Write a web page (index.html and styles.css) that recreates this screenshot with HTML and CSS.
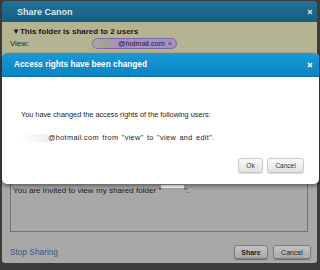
FILE: index.html
```html
<!DOCTYPE html>
<html>
<head>
<meta charset="utf-8">
<link rel="stylesheet" href="styles.css">
</head>
<body>
<div class="page">
  <div class="dlg">
    <div class="dlg-head">
      <span>Share Canon</span>
      <svg class="x" width="6" height="6" viewBox="0 0 6 6"><path d="M1 1L5 5M5 1L1 5" stroke="#c9d6de" stroke-width="1.6"/></svg>
    </div>
    <div class="shared">
      <div class="shared-title">▼This folder is shared to 2 users</div>
      <div class="shared-row">
        <span class="lbl">View:</span>
        <span class="pill"><span class="blur"></span>@hotmail.com<span class="px">×</span></span>
      </div>
    </div>
    <div class="dlg-body">
      <div class="msgbox">You are invited to view my shared folder "<span class="redact"></span>".</div>
      <div class="foot">
        <a class="stop">Stop Sharing</a>
        <div class="btns">
          <button class="btn dark strong">Share</button>
          <button class="btn dark">Cancel</button>
        </div>
      </div>
    </div>
  </div>

  <div class="modal">
    <div class="modal-head">
      <span>Access rights have been changed</span>
      <svg class="x" width="6" height="6" viewBox="0 0 6 6"><path d="M1 1L5 5M5 1L1 5" stroke="#ffffff" stroke-width="1.6"/></svg>
    </div>
    <div class="modal-body">
      <p class="line1">You have changed the access rights of the following users:</p>
      <p class="line2"><span class="ghost"></span>@hotmail.com from "view" to "view and edit".</p>
      <div class="modal-btns">
        <button class="btn light">Ok</button>
        <button class="btn light">Cancel</button>
      </div>
    </div>
  </div>
</div>
</body>
</html>
```

FILE: styles.css
```css
html, body {
  margin: 0;
  padding: 0;
}
body {
  width: 320px;
  height: 270px;
  overflow: hidden;
  background: #3c3c3c;
  font-family: "Liberation Sans", Arial, Helvetica, sans-serif;
}
.page {
  position: relative;
  height: 270px;
  padding: 1px 3px 0 2px;
  box-sizing: border-box;
}
.dlg {
  height: 262px;
  background: #a8a8a8;
  border-radius: 5px 5px 3px 3px;
  display: flex;
  flex-direction: column;
  overflow: hidden;
}
.dlg-head {
  height: 21px;
  flex: none;
  background: linear-gradient(#1f7299, #155f80);
  color: #dfe8ee;
  font-weight: bold;
  font-size: 9px;
  display: flex;
  align-items: center;
  justify-content: space-between;
  padding: 0 4px 0 15px;
}
.shared {
  flex: none;
  height: 31px;
  box-sizing: border-box;
  background: #b4b392;
  padding: 5px 8px 3px 8px;
  color: #1a1a14;
  font-size: 8px;
}
.shared-title {
  height: 10px;
  line-height: 10px;
  font-weight: bold;
  padding-left: 2px;
}
.shared-row {
  height: 13px;
  display: flex;
  align-items: center;
}
.lbl {
  width: 82px;
  color: #2b2b22;
  font-size: 7.8px;
}
.pill {
  height: 11px;
  box-sizing: border-box;
  display: flex;
  align-items: center;
  background: #a48fcb;
  border: 1px solid #7f68aa;
  border-radius: 6px;
  padding-right: 4px;
  font-size: 7.3px;
  color: #222;
  overflow: hidden;
}
.blur {
  width: 25px;
  height: 11px;
  background: linear-gradient(90deg, #a9a59e 0%, #a3a18c 60%, #a48fcb 100%);
}
.px {
  margin-left: 3px;
  color: #444;
}
.dlg-body {
  flex: 1;
  padding: 127px 6px 0 8px;
  display: flex;
  flex-direction: column;
}
.msgbox {
  height: 52px;
  box-sizing: border-box;
  margin-right: 3px;
  border: 1px solid #727272;
  padding: 4px 2px;
  font-size: 8.1px;
  line-height: 10px;
  color: #1c1c1c;
}
.redact {
  display: inline-block;
  width: 23px;
  height: 3px;
  background: #ffffff;
  vertical-align: 5px;
}
.foot {
  margin-top: 13px;
  display: flex;
  align-items: center;
  justify-content: space-between;
}
.stop {
  color: #3a5785;
  font-size: 8.3px;
}
.btns {
  display: flex;
  gap: 5px;
}
.btn {
  font-family: "Liberation Sans", Arial, sans-serif;
  font-size: 7px;
  border-radius: 3px;
  padding: 0;
  height: 14px;
  box-sizing: border-box;
}
.btn.dark {
  background: linear-gradient(#c3c3c3, #a9a9a9);
  border: 1px solid #7e7e7e;
  box-shadow: 0 1px 1px rgba(0,0,0,0.35);
  color: #1d1d1d;
}
.btn.dark.strong {
  font-weight: bold;
  width: 34px;
}
.btn.dark:not(.strong) {
  width: 38px;
}
.modal {
  position: absolute;
  left: 2px;
  top: 53px;
  width: 317px;
  height: 131px;
  border-radius: 5px;
  overflow: hidden;
  background: #ffffff;
  box-shadow: 0 2px 4px rgba(0,0,0,0.45);
  display: flex;
  flex-direction: column;
}
.modal-head {
  height: 24px;
  flex: none;
  box-sizing: border-box;
  background: linear-gradient(#1a98d6, #0a84c2);
  border-bottom: 1px solid #0b6fa3;
  color: #ffffff;
  font-weight: bold;
  font-size: 8.25px;
  display: flex;
  align-items: center;
  justify-content: space-between;
  padding: 0 6px 0 12px;
}
.modal-body {
  padding: 33px 15px 0 19px;
  font-size: 7.3px;
  color: #222;
}
.modal-body p {
  margin: 0;
  line-height: 10px;
}
.line2 {
  margin-top: 13px !important;
  display: flex;
  align-items: center;
  letter-spacing: 0.35px;
  word-spacing: 1px;
}
.ghost {
  width: 27px;
  height: 8px;
  background: linear-gradient(90deg, rgba(230,230,230,0), #eeeeee);
}
.modal-btns {
  margin-top: 15px;
  display: flex;
  justify-content: flex-end;
  gap: 4px;
}
.btn.light {
  height: 15px;
  background: linear-gradient(#fbfbfb, #e2e2e2);
  border: 1px solid #c9c9c9;
  box-shadow: 0 1px 1px rgba(0,0,0,0.15);
  color: #333;
  font-size: 6.5px;
}
.btn.light:first-child {
  width: 25px;
}
.btn.light:last-child {
  width: 37px;
}
```
